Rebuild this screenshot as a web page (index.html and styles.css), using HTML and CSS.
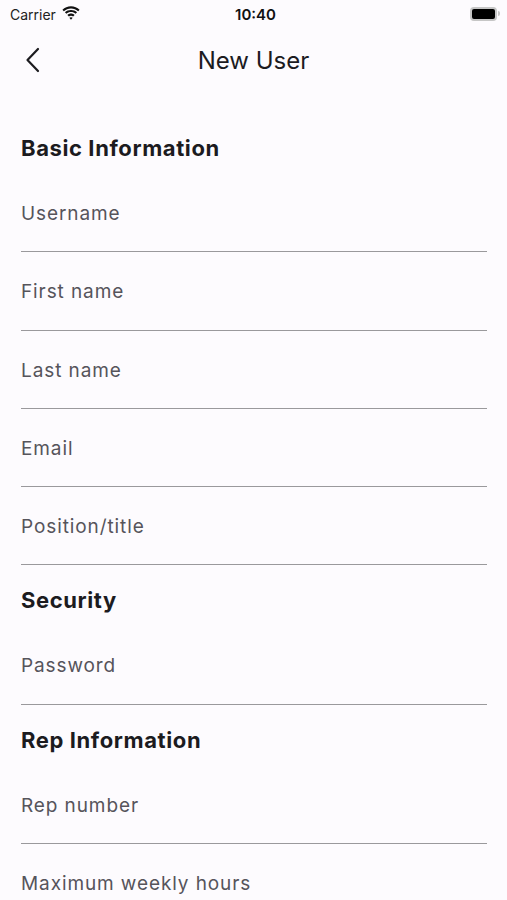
FILE: index.html
```html
<!DOCTYPE html>
<html lang="en">
<head>
  <meta charset="UTF-8">
  <meta name="viewport" content="width=device-width, initial-scale=1.0">
  <title>New User</title>
  <link rel="stylesheet" href="styles.css">
</head>
<body>
  <div class="status-bar">
    <div class="carrier">
      Carrier
      <svg class="wifi" width="18" height="14" viewBox="0 0 17 13">
        <path d="M8.5 2.2c2.6 0 5 1 6.8 2.7l1.3-1.4C14.5 1.4 11.6.2 8.5.2S2.5 1.4.4 3.5l1.3 1.4C3.5 3.2 5.9 2.2 8.5 2.2z" fill="#111"/>
        <path d="M8.5 5.6c1.7 0 3.2.6 4.4 1.7l1.3-1.4C12.7 4.5 10.7 3.7 8.5 3.7S4.3 4.5 2.8 5.9l1.3 1.4C5.3 6.2 6.8 5.6 8.5 5.6z" fill="#111"/>
        <path d="M8.5 9c.8 0 1.5.3 2 .8l1.4-1.4C11 7.5 9.8 7 8.5 7S6 7.5 5.1 8.4l1.4 1.4c.5-.5 1.2-.8 2-.8zM8.5 12.8l1.6-1.7c-.4-.4-1-.6-1.6-.6s-1.2.2-1.6.6z" fill="#111"/>
      </svg>
    </div>
    <div class="clock">10:40</div>
    <div class="battery"><span class="battery-level"></span></div>
  </div>

  <header class="app-bar">
    <button class="back" aria-label="Back">
      <svg width="16" height="26" viewBox="0 0 16 26">
        <path d="M13 2 L2.5 13 L13 24" fill="none" stroke="#1c1b1f" stroke-width="2.2" stroke-linecap="round" stroke-linejoin="round"/>
      </svg>
    </button>
    <h1 class="title">New User</h1>
  </header>

  <main class="form">
    <h2 class="section">Basic Information</h2>
    <label class="field">Username</label>
    <label class="field">First name</label>
    <label class="field">Last name</label>
    <label class="field">Email</label>
    <label class="field">Position/title</label>

    <h2 class="section">Security</h2>
    <label class="field">Password</label>

    <h2 class="section">Rep Information</h2>
    <label class="field">Rep number</label>
    <label class="field">Maximum weekly hours</label>
  </main>
</body>
</html>
```

FILE: styles.css
```css
body {
  margin: 0;
  padding: 0;
  background-color: #fdfbfe;
  color: #1c1b1f;
  font-family: Inter, Roboto, "Noto Sans", sans-serif;
  overflow: hidden;
}

.status-bar {
  display: flex;
  justify-content: space-between;
  align-items: center;
  height: 28px;
  padding: 0 6px 0 10px;
}

.carrier {
  display: flex;
  align-items: center;
  gap: 6px;
  width: 120px;
  font-size: 14px;
  color: #222;
}

.wifi {
  margin-top: -2px;
}

.clock {
  font-size: 15px;
  font-weight: 600;
  color: #111;
}

.battery {
  display: flex;
  justify-content: flex-end;
  width: 120px;
}

.battery-level {
  position: relative;
  width: 23px;
  height: 10px;
  background-color: #000;
  border: 2px solid #c6c6c6;
  border-radius: 4px;
  margin-right: 4px;
}

.battery-level::after {
  content: "";
  position: absolute;
  right: -5px;
  top: 2px;
  width: 2px;
  height: 5px;
  background-color: #c6c6c6;
  border-radius: 0 2px 2px 0;
}

.app-bar {
  display: flex;
  align-items: center;
  height: 64px;
  position: relative;
}

.back {
  background: none;
  border: none;
  padding: 0;
  margin-left: 25px;
  display: flex;
  cursor: pointer;
}

.title {
  position: absolute;
  left: 0;
  right: 0;
  margin: 0;
  text-align: center;
  font-size: 24px;
  font-weight: 400;
  pointer-events: none;
}

.form {
  display: flex;
  flex-direction: column;
  padding: 21px 20px 0 21px;
}

.section {
  margin: 21px 0 12px;
  height: 28px;
  line-height: 28px;
  font-size: 22px;
  font-weight: 700;
  letter-spacing: 0.6px;
  color: #1c1b1f;
}

.field {
  display: block;
  height: 49.25px;
  padding-top: 28px;
  line-height: 24px;
  font-size: 19px;
  letter-spacing: 0.9px;
  color: #56545b;
  border-bottom: 1px solid #9a999c;
  box-sizing: content-box;
}
```
